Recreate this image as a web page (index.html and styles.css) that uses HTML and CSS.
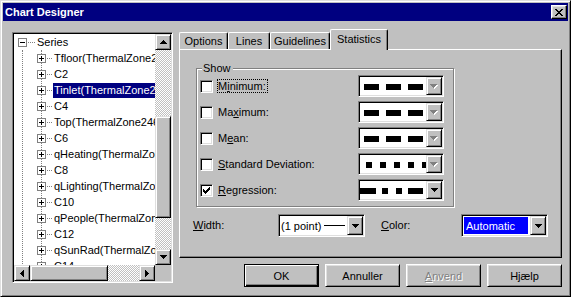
FILE: index.html
```html
<!DOCTYPE html>
<html lang="da">
<head>
    <meta charset="UTF-8">
    <title>Chart Designer</title>
    <link rel="stylesheet" href="styles.css">
</head>
<body>
<div class="window">
    <div class="titlebar">
        <span class="title">Chart Designer</span>
        <span class="close-btn">
            <svg width="8" height="7" viewBox="0 0 8 7"><path d="M0 0h2v1H0zM6 0h2v1H6zM1 1h2v1H1zM5 1h2v1H5zM2 2h4v1H2zM3 3h2v1H3zM2 4h4v1H2zM1 5h2v1H1zM5 5h2v1H5zM0 6h2v1H0zM6 6h2v1H6z"/></svg>
        </span>
    </div>

    <div class="content">
        <!-- series tree -->
        <div class="tree">
            <div class="tree-items">
                <div class="tree-row root">
                    <span class="toggle"><svg width="7" height="7" viewBox="0 0 7 7"><path d="M1 3h5v1H1z"/></svg></span>
                    <span class="dots"></span>
                    <span class="label">Series</span>
                </div>
                <div class="tree-children">
                    <div class="branch">
                        <div class="tree-row"><span class="toggle"><svg width="7" height="7" viewBox="0 0 7 7"><path d="M1 3h5v1H1zM3 1h1v5H3z"/></svg></span><span class="dots"></span><span class="label">Tfloor(ThermalZone246)</span></div>
                        <div class="tree-row"><span class="toggle"><svg width="7" height="7" viewBox="0 0 7 7"><path d="M1 3h5v1H1zM3 1h1v5H3z"/></svg></span><span class="dots"></span><span class="label">C2</span></div>
                        <div class="tree-row"><span class="toggle"><svg width="7" height="7" viewBox="0 0 7 7"><path d="M1 3h5v1H1zM3 1h1v5H3z"/></svg></span><span class="dots"></span><span class="label selected">Tinlet(ThermalZone246)</span></div>
                        <div class="tree-row"><span class="toggle"><svg width="7" height="7" viewBox="0 0 7 7"><path d="M1 3h5v1H1zM3 1h1v5H3z"/></svg></span><span class="dots"></span><span class="label">C4</span></div>
                        <div class="tree-row"><span class="toggle"><svg width="7" height="7" viewBox="0 0 7 7"><path d="M1 3h5v1H1zM3 1h1v5H3z"/></svg></span><span class="dots"></span><span class="label">Top(ThermalZone246)</span></div>
                        <div class="tree-row"><span class="toggle"><svg width="7" height="7" viewBox="0 0 7 7"><path d="M1 3h5v1H1zM3 1h1v5H3z"/></svg></span><span class="dots"></span><span class="label">C6</span></div>
                        <div class="tree-row"><span class="toggle"><svg width="7" height="7" viewBox="0 0 7 7"><path d="M1 3h5v1H1zM3 1h1v5H3z"/></svg></span><span class="dots"></span><span class="label">qHeating(ThermalZone246)</span></div>
                        <div class="tree-row"><span class="toggle"><svg width="7" height="7" viewBox="0 0 7 7"><path d="M1 3h5v1H1zM3 1h1v5H3z"/></svg></span><span class="dots"></span><span class="label">C8</span></div>
                        <div class="tree-row"><span class="toggle"><svg width="7" height="7" viewBox="0 0 7 7"><path d="M1 3h5v1H1zM3 1h1v5H3z"/></svg></span><span class="dots"></span><span class="label">qLighting(ThermalZone246)</span></div>
                        <div class="tree-row"><span class="toggle"><svg width="7" height="7" viewBox="0 0 7 7"><path d="M1 3h5v1H1zM3 1h1v5H3z"/></svg></span><span class="dots"></span><span class="label">C10</span></div>
                        <div class="tree-row"><span class="toggle"><svg width="7" height="7" viewBox="0 0 7 7"><path d="M1 3h5v1H1zM3 1h1v5H3z"/></svg></span><span class="dots"></span><span class="label">qPeople(ThermalZone246)</span></div>
                        <div class="tree-row"><span class="toggle"><svg width="7" height="7" viewBox="0 0 7 7"><path d="M1 3h5v1H1zM3 1h1v5H3z"/></svg></span><span class="dots"></span><span class="label">C12</span></div>
                        <div class="tree-row"><span class="toggle"><svg width="7" height="7" viewBox="0 0 7 7"><path d="M1 3h5v1H1zM3 1h1v5H3z"/></svg></span><span class="dots"></span><span class="label">qSunRad(ThermalZone246)</span></div>
                        <div class="tree-row"><span class="toggle"><svg width="7" height="7" viewBox="0 0 7 7"><path d="M1 3h5v1H1zM3 1h1v5H3z"/></svg></span><span class="dots"></span><span class="label">C14</span></div>
                    </div>
                </div>
            </div>
            <div class="vscroll">
                <span class="sb-btn"><svg width="7" height="4" viewBox="0 0 7 4"><path d="M3 0h1v1h1v1h1v1h1v1H0V3h1V2h1V1h1z"/></svg></span>
                <span class="sb-track top-track"></span>
                <span class="sb-thumb v-thumb"></span>
                <span class="sb-track fill-track"></span>
                <span class="sb-btn"><svg width="7" height="4" viewBox="0 0 7 4"><path d="M0 0h7v1H6v1H5v1H4v1H3V3H2V2H1V1H0z"/></svg></span>
            </div>
            <div class="hscroll">
                <span class="sb-btn"><svg width="4" height="7" viewBox="0 0 4 7"><path d="M3 0h1v7H3V6H2V5H1V4H0V3h1V2h1V1h1z"/></svg></span>
                <span class="sb-thumb h-thumb"></span>
                <span class="sb-track fill-track"></span>
                <span class="sb-btn"><svg width="4" height="7" viewBox="0 0 4 7"><path d="M0 0h1v1h1v1h1v1h1v1H3v1H2v1H1v1H0z"/></svg></span>
            </div>
            <div class="corner"></div>
        </div>

        <div class="main">
            <div class="tabs">
                <span class="tab tab-options">Options</span>
                <span class="tab tab-lines">Lines</span>
                <span class="tab tab-guidelines">Guidelines</span>
                <span class="tab tab-statistics active">Statistics</span>
            </div>

            <div class="panel">
                <div class="group">
                    <span class="group-title">Show</span>

                    <div class="stat-row">
                        <span class="check"></span>
                        <span class="stat-label"><span class="focus">M<u>i</u>nimum:</span></span>
                        <div class="combo line-combo">
                            <div class="combo-field">
                                <svg class="pattern pattern-dash" width="66" height="6" viewBox="0 0 66 6"><path d="M0 0h15v6H0zM22 0h15v6H22zM44 0h15v6H44z"/></svg>
                            </div>
                            <span class="combo-btn disabled"><svg width="8" height="5" viewBox="0 0 8 5"><path fill="#fff" d="M1 1h7v1H7v1H6v1H5v1H4V4H3V3H2V2H1z"/><path fill="#808080" d="M0 0h7v1H6v1H5v1H4v1H3V3H2V2H1V1H0z"/></svg></span>
                        </div>
                    </div>

                    <div class="stat-row">
                        <span class="check"></span>
                        <span class="stat-label">Ma<u>x</u>imum:</span>
                        <div class="combo line-combo">
                            <div class="combo-field">
                                <svg class="pattern pattern-dash" width="66" height="6" viewBox="0 0 66 6"><path d="M0 0h15v6H0zM22 0h15v6H22zM44 0h15v6H44z"/></svg>
                            </div>
                            <span class="combo-btn disabled"><svg width="8" height="5" viewBox="0 0 8 5"><path fill="#fff" d="M1 1h7v1H7v1H6v1H5v1H4V4H3V3H2V2H1z"/><path fill="#808080" d="M0 0h7v1H6v1H5v1H4v1H3V3H2V2H1V1H0z"/></svg></span>
                        </div>
                    </div>

                    <div class="stat-row">
                        <span class="check"></span>
                        <span class="stat-label">M<u>e</u>an:</span>
                        <div class="combo line-combo">
                            <div class="combo-field">
                                <svg class="pattern pattern-dash" width="66" height="6" viewBox="0 0 66 6"><path d="M0 0h15v6H0zM22 0h15v6H22zM44 0h15v6H44z"/></svg>
                            </div>
                            <span class="combo-btn disabled"><svg width="8" height="5" viewBox="0 0 8 5"><path fill="#fff" d="M1 1h7v1H7v1H6v1H5v1H4V4H3V3H2V2H1z"/><path fill="#808080" d="M0 0h7v1H6v1H5v1H4v1H3V3H2V2H1V1H0z"/></svg></span>
                        </div>
                    </div>

                    <div class="stat-row">
                        <span class="check"></span>
                        <span class="stat-label"><u>S</u>tandard Deviation:</span>
                        <div class="combo line-combo">
                            <div class="combo-field">
                                <svg class="pattern pattern-dot" width="66" height="6" viewBox="0 0 66 6"><path d="M0 0h6v6H0zM14 0h6v6H14zM28 0h6v6H28zM42 0h6v6H42zM56 0h6v6H56z"/></svg>
                            </div>
                            <span class="combo-btn disabled"><svg width="8" height="5" viewBox="0 0 8 5"><path fill="#fff" d="M1 1h7v1H7v1H6v1H5v1H4V4H3V3H2V2H1z"/><path fill="#808080" d="M0 0h7v1H6v1H5v1H4v1H3V3H2V2H1V1H0z"/></svg></span>
                        </div>
                    </div>

                    <div class="stat-row">
                        <span class="check checked"><svg width="7" height="7" viewBox="0 0 7 7"><path d="M6 0h1v1H6zM5 1h2v1H5zM0 2h1v1H0zM4 2h3v1H4zM0 3h2v1H0zM3 3h3v1H3zM0 4h5v1H0zM1 5h3v1H1zM2 6h1v1H2z"/></svg></span>
                        <span class="stat-label"><u>R</u>egression:</span>
                        <div class="combo line-combo">
                            <div class="combo-field">
                                <svg class="pattern pattern-dashdot" width="66" height="6" viewBox="0 0 66 6"><path d="M0 0h16v6H0zM22 0h6v6H22zM36 0h6v6H36zM48 0h15v6H48z"/></svg>
                            </div>
                            <span class="combo-btn"><svg width="7" height="4" viewBox="0 0 7 4"><path d="M0 0h7v1H6v1H5v1H4v1H3V3H2V2H1V1H0z"/></svg></span>
                        </div>
                    </div>
                </div>

                <div class="prop-row">
                    <span class="prop-label width-label"><u>W</u>idth:</span>
                    <div class="combo prop-combo">
                        <div class="combo-field width-field">
                            <span>(1 point)</span>
                            <span class="line-sample"></span>
                        </div>
                        <span class="combo-btn"><svg width="7" height="4" viewBox="0 0 7 4"><path d="M0 0h7v1H6v1H5v1H4v1H3V3H2V2H1V1H0z"/></svg></span>
                    </div>
                    <span class="prop-label color-label"><u>C</u>olor:</span>
                    <div class="combo prop-combo">
                        <div class="combo-field">
                            <span class="color-value">Automatic</span>
                        </div>
                        <span class="combo-btn"><svg width="7" height="4" viewBox="0 0 7 4"><path d="M0 0h7v1H6v1H5v1H4v1H3V3H2V2H1V1H0z"/></svg></span>
                    </div>
                </div>
            </div>

            <div class="buttons">
                <button class="btn default">OK</button>
                <button class="btn">Annuller</button>
                <button class="btn disabled"><u>A</u>nvend</button>
                <button class="btn">Hjælp</button>
            </div>
        </div>
    </div>
</div>
</body>
</html>
```
FILE: styles.css
```css
* {
    box-sizing: border-box;
}

body {
    margin: 0;
    background-color: #c0c0c0;
    color: #000;
    font-family: "Liberation Sans", Arial, sans-serif;
    font-size: 11px;
}

u {
    text-decoration: underline;
    text-underline-offset: 1px;
}

.window {
    width: 571px;
    height: 297px;
    background-color: #c0c0c0;
    border: 1px solid;
    border-color: #dfdfdf #000 #000 #dfdfdf;
    box-shadow: inset 1px 1px #fff, inset -1px -1px #808080;
    padding: 2px;
}

/* title bar */
.titlebar {
    height: 18px;
    background-color: #000080;
    color: #fff;
    font-weight: bold;
    display: flex;
    align-items: center;
    justify-content: space-between;
    padding: 0 1px 0 2px;
}

.close-btn {
    width: 16px;
    height: 14px;
    background-color: #c0c0c0;
    border: 1px solid;
    border-color: #fff #000 #000 #fff;
    box-shadow: inset -1px -1px #808080, inset 1px 1px #dfdfdf;
    display: flex;
    align-items: center;
    justify-content: center;
}

.content {
    display: flex;
    align-items: flex-start;
    padding: 8px 0 0 9px;
}

/* tree view */
.tree {
    margin-top: 3px;
    width: 161px;
    height: 251px;
    background-color: #fff;
    border: 1px solid;
    border-color: #808080 #fff #fff #808080;
    box-shadow: inset 1px 1px #000, inset -1px -1px #dfdfdf;
    padding: 1px;
    display: grid;
    grid-template-columns: 1fr 16px;
    grid-template-rows: 1fr 16px;
}

.tree-items {
    overflow: hidden;
    white-space: nowrap;
}

.tree-row {
    height: 16px;
    display: flex;
    align-items: center;
}

.tree-row.root {
    padding-left: 4px;
}

.toggle {
    width: 9px;
    height: 9px;
    flex-shrink: 0;
    border: 1px solid #808080;
    background-color: #fff;
    display: flex;
}

.tree-row .toggle {
    margin-left: -5px;
}

.tree-row.root .toggle {
    margin-left: 0;
}

.dots {
    width: 5px;
    flex-shrink: 0;
    margin: 0 1px 0 1px;
    border-top: 1px dotted #808080;
}

.tree-row.root .dots {
    width: 7px;
}

.label {
    flex-shrink: 0;
    padding: 0 1px;
    line-height: 15px;
}

.label.selected {
    background-color: #000080;
    color: #fff;
}

.tree-children {
    margin-left: 8px;
    border-left: 1px dotted #808080;
}

.branch {
    margin-left: 18px;
    border-left: 1px dotted #808080;
}

/* scrollbars */
.vscroll {
    display: flex;
    flex-direction: column;
}

.hscroll {
    display: flex;
}

.sb-btn,
.sb-thumb {
    background-color: #c0c0c0;
    border: 1px solid;
    border-color: #dfdfdf #000 #000 #dfdfdf;
    box-shadow: inset 1px 1px #fff, inset -1px -1px #808080;
}

.sb-btn {
    width: 16px;
    height: 16px;
    flex-shrink: 0;
    display: flex;
    align-items: center;
    justify-content: center;
}

.sb-track {
    background: repeating-conic-gradient(#fff 0% 25%, #c0c0c0 0% 50%) 0 0 / 2px 2px;
}

.top-track {
    height: 66px;
}

.fill-track {
    flex: 1;
}

.v-thumb {
    height: 102px;
}

.h-thumb {
    width: 78px;
}

.corner {
    background-color: #c0c0c0;
}

/* right side */
.main {
    width: 383px;
    margin-left: 6px;
}

.tabs {
    height: 20px;
    display: flex;
    align-items: flex-end;
}

.tab {
    height: 17px;
    display: flex;
    align-items: center;
    justify-content: center;
    border-top: 1px solid #fff;
    border-left: 1px solid #fff;
    border-right: 1px solid #000;
    box-shadow: inset -1px 0 #808080;
    border-radius: 2px 2px 0 0;
    padding-bottom: 1px;
}

.tab-options {
    width: 49px;
}

.tab-lines {
    width: 42px;
}

.tab-guidelines {
    width: 60px;
}

.tab-statistics {
    width: 58px;
}

.tab.active {
    height: 21px;
    margin-bottom: -1px;
    position: relative;
    z-index: 1;
    background-color: #c0c0c0;
    padding-bottom: 3px;
}

.panel {
    height: 209px;
    border: 1px solid;
    border-color: #fff #000 #000 #fff;
    box-shadow: inset -1px -1px #808080;
    padding: 18px 0 0 16px;
}

.group {
    position: relative;
    width: 258px;
    height: 139px;
    border: 1px solid #808080;
    box-shadow: inset 1px 1px #fff, 1px 1px #fff;
    padding: 6px 9px 0 3px;
    display: flex;
    flex-direction: column;
    gap: 4px;
}

.group-title {
    position: absolute;
    top: -7px;
    left: 5px;
    padding: 0 2px 0 1px;
    background-color: #c0c0c0;
    line-height: 13px;
}

.stat-row {
    height: 22px;
    display: flex;
    align-items: center;
}

.check {
    width: 13px;
    height: 13px;
    flex-shrink: 0;
    background-color: #fff;
    border: 1px solid;
    border-color: #808080 #fff #fff #808080;
    box-shadow: inset 1px 1px #000, inset -1px -1px #dfdfdf;
    display: flex;
    align-items: center;
    justify-content: center;
}

.stat-label {
    margin-left: 5px;
    flex: 1;
}

.focus {
    outline: 1px dotted #000;
    outline-offset: 0;
    padding: 0 1px 0 0;
}

.combo {
    display: flex;
    background-color: #fff;
    border: 1px solid;
    border-color: #808080 #fff #fff #808080;
    box-shadow: inset 1px 1px #000, inset -1px -1px #dfdfdf;
    padding: 1px;
}

.line-combo {
    width: 86px;
    height: 22px;
}

.combo-field {
    flex: 1;
    display: flex;
    align-items: center;
    overflow: hidden;
}

.pattern {
    flex-shrink: 0;
    margin-top: 1px;
}

.pattern-dash {
    margin-left: 4px;
}

.pattern-dot {
    margin-left: 6px;
}

.combo-btn {
    width: 16px;
    flex-shrink: 0;
    background-color: #c0c0c0;
    border: 1px solid;
    border-color: #dfdfdf #000 #000 #dfdfdf;
    box-shadow: inset 1px 1px #fff, inset -1px -1px #808080;
    display: flex;
    align-items: center;
    justify-content: center;
}

.prop-row {
    margin: 7px 0 0 -3px;
    height: 23px;
    display: flex;
    align-items: center;
}

.prop-label {
    padding-bottom: 2px;
}

.width-label {
    width: 85px;
}

.color-label {
    width: 80px;
    margin-left: 16px;
}

.prop-combo {
    width: 87px;
    height: 23px;
}

.width-field {
    padding-left: 1px;
}

.line-sample {
    flex: 1;
    max-width: 27px;
    height: 1px;
    margin: 0 2px 0 3px;
    background-color: #000;
}

.color-value {
    flex: 1;
    align-self: stretch;
    margin: 1px 2px 1px 1px;
    padding-left: 2px;
    background-color: #0000ff;
    color: #fff;
    display: flex;
    align-items: center;
}

/* dialog buttons */
.buttons {
    margin-top: 6px;
    display: flex;
    justify-content: flex-end;
    gap: 6px;
}

.btn {
    width: 75px;
    height: 23px;
    font: inherit;
    color: #000;
    background-color: #c0c0c0;
    border: 1px solid;
    border-color: #fff #000 #000 #fff;
    box-shadow: inset 1px 1px #dfdfdf, inset -1px -1px #808080;
    padding: 0;
}

.btn.default {
    border-color: #000;
    box-shadow: inset 1px 1px #fff, inset -1px -1px #000, inset -2px -2px #808080;
}

.btn.disabled {
    color: #808080;
    text-shadow: 1px 1px #fff;
}
```
